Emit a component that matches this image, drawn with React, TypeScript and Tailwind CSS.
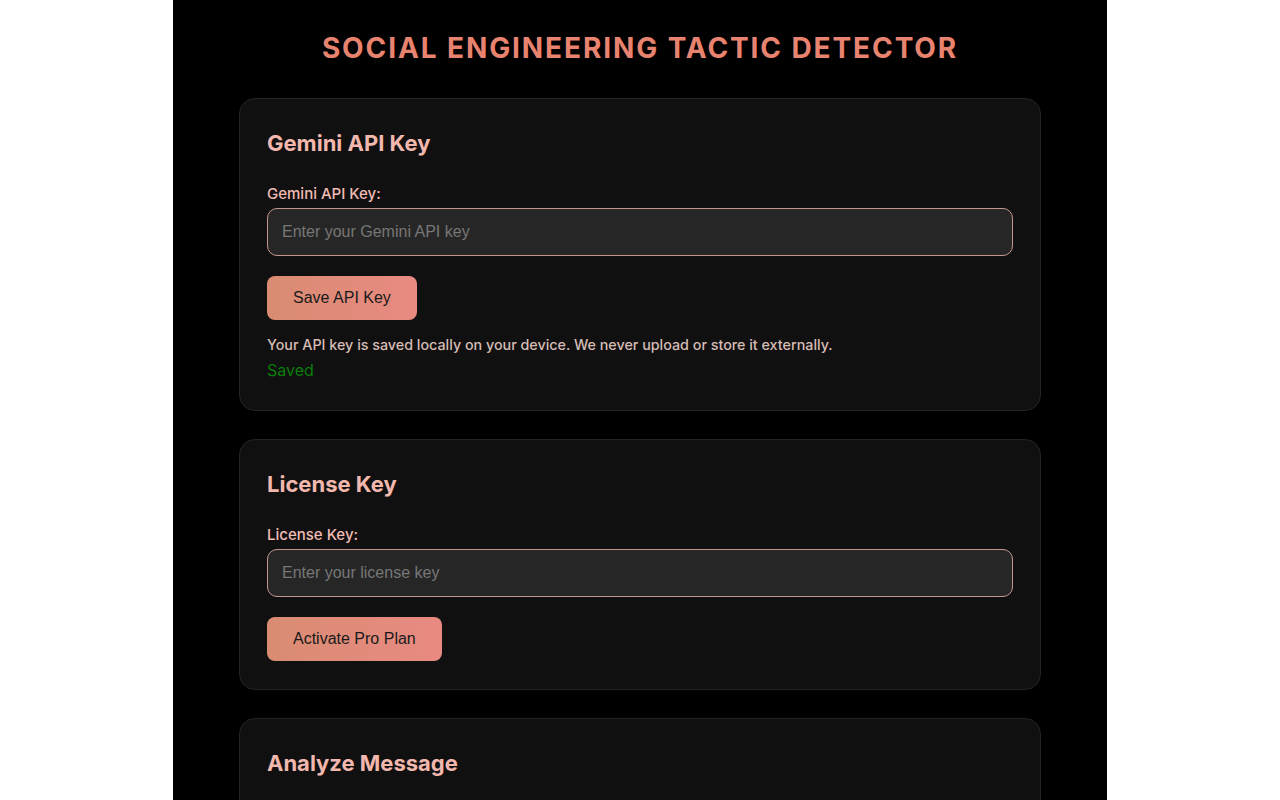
import React from 'react';

const inter = { fontFamily: 'Inter, "Noto Sans", sans-serif' };

function Card({ title, children }: { title: string; children: React.ReactNode }) {
  return (
    <section className="mb-7 rounded-2xl border border-[#242424] bg-[#101010] px-[27px] pt-7 pb-7">
      <h2 className="text-[22px] leading-[33px] font-bold text-[#f2b8ae] mb-[23px]">{title}</h2>
      {children}
    </section>
  );
}

function Field({ label, placeholder }: { label: string; placeholder: string }) {
  return (
    <div>
      <label className="block text-[15px] leading-[22px] font-medium text-[#f0bcb3] mb-[3px]">{label}</label>
      <input
        type="text"
        placeholder={placeholder}
        className="block w-full h-12 rounded-[10px] border border-[#c4978c] bg-[#262626] px-[14px] text-[16px] text-[#ddd] placeholder:text-[#777] outline-none"
        style={{ fontFamily: '"Liberation Sans", Arial, sans-serif' }}
      />
    </div>
  );
}

function Btn({ children }: { children: React.ReactNode }) {
  return (
    <button
      className="mt-5 h-11 rounded-lg bg-gradient-to-r from-[#d98c72] to-[#e98a82] px-[26px] text-[16px] text-[#1a1a1a]"
      style={{ fontFamily: '"Liberation Sans", Arial, sans-serif' }}
    >
      {children}
    </button>
  );
}

export default function App() {
  return (
    <div className="min-h-screen bg-white" style={inter}>
      <main className="mx-auto min-h-screen w-[934px] bg-black px-[66px] pt-[27px]">
        {/* ═══ HEADER ═══ */}
        <h1 className="text-center text-[28px] leading-[42px] font-bold uppercase tracking-[1.9px] text-[#e8836f] mb-[29px]">
          Social Engineering Tactic Detector
        </h1>

        {/* ═══ API KEY ═══ */}
        <Card title="Gemini API Key">
          <Field label="Gemini API Key:" placeholder="Enter your Gemini API key" />
          <Btn>Save API Key</Btn>
          <p className="mt-[14px] text-[14.3px] leading-[21px] font-medium text-[#d6bcb5]">
            Your API key is saved locally on your device. We never upload or store it externally.
          </p>
          <p className="mt-[3px] text-[16px] leading-[24px] text-[#0a7d0a]">Saved</p>
        </Card>

        {/* ═══ LICENSE ═══ */}
        <Card title="License Key">
          <Field label="License Key:" placeholder="Enter your license key" />
          <Btn>Activate Pro Plan</Btn>
        </Card>

        {/* ═══ ANALYZE ═══ */}
        <Card title="Analyze Message">
          <div className="h-40" />
        </Card>
      </main>
    </div>
  );
}
